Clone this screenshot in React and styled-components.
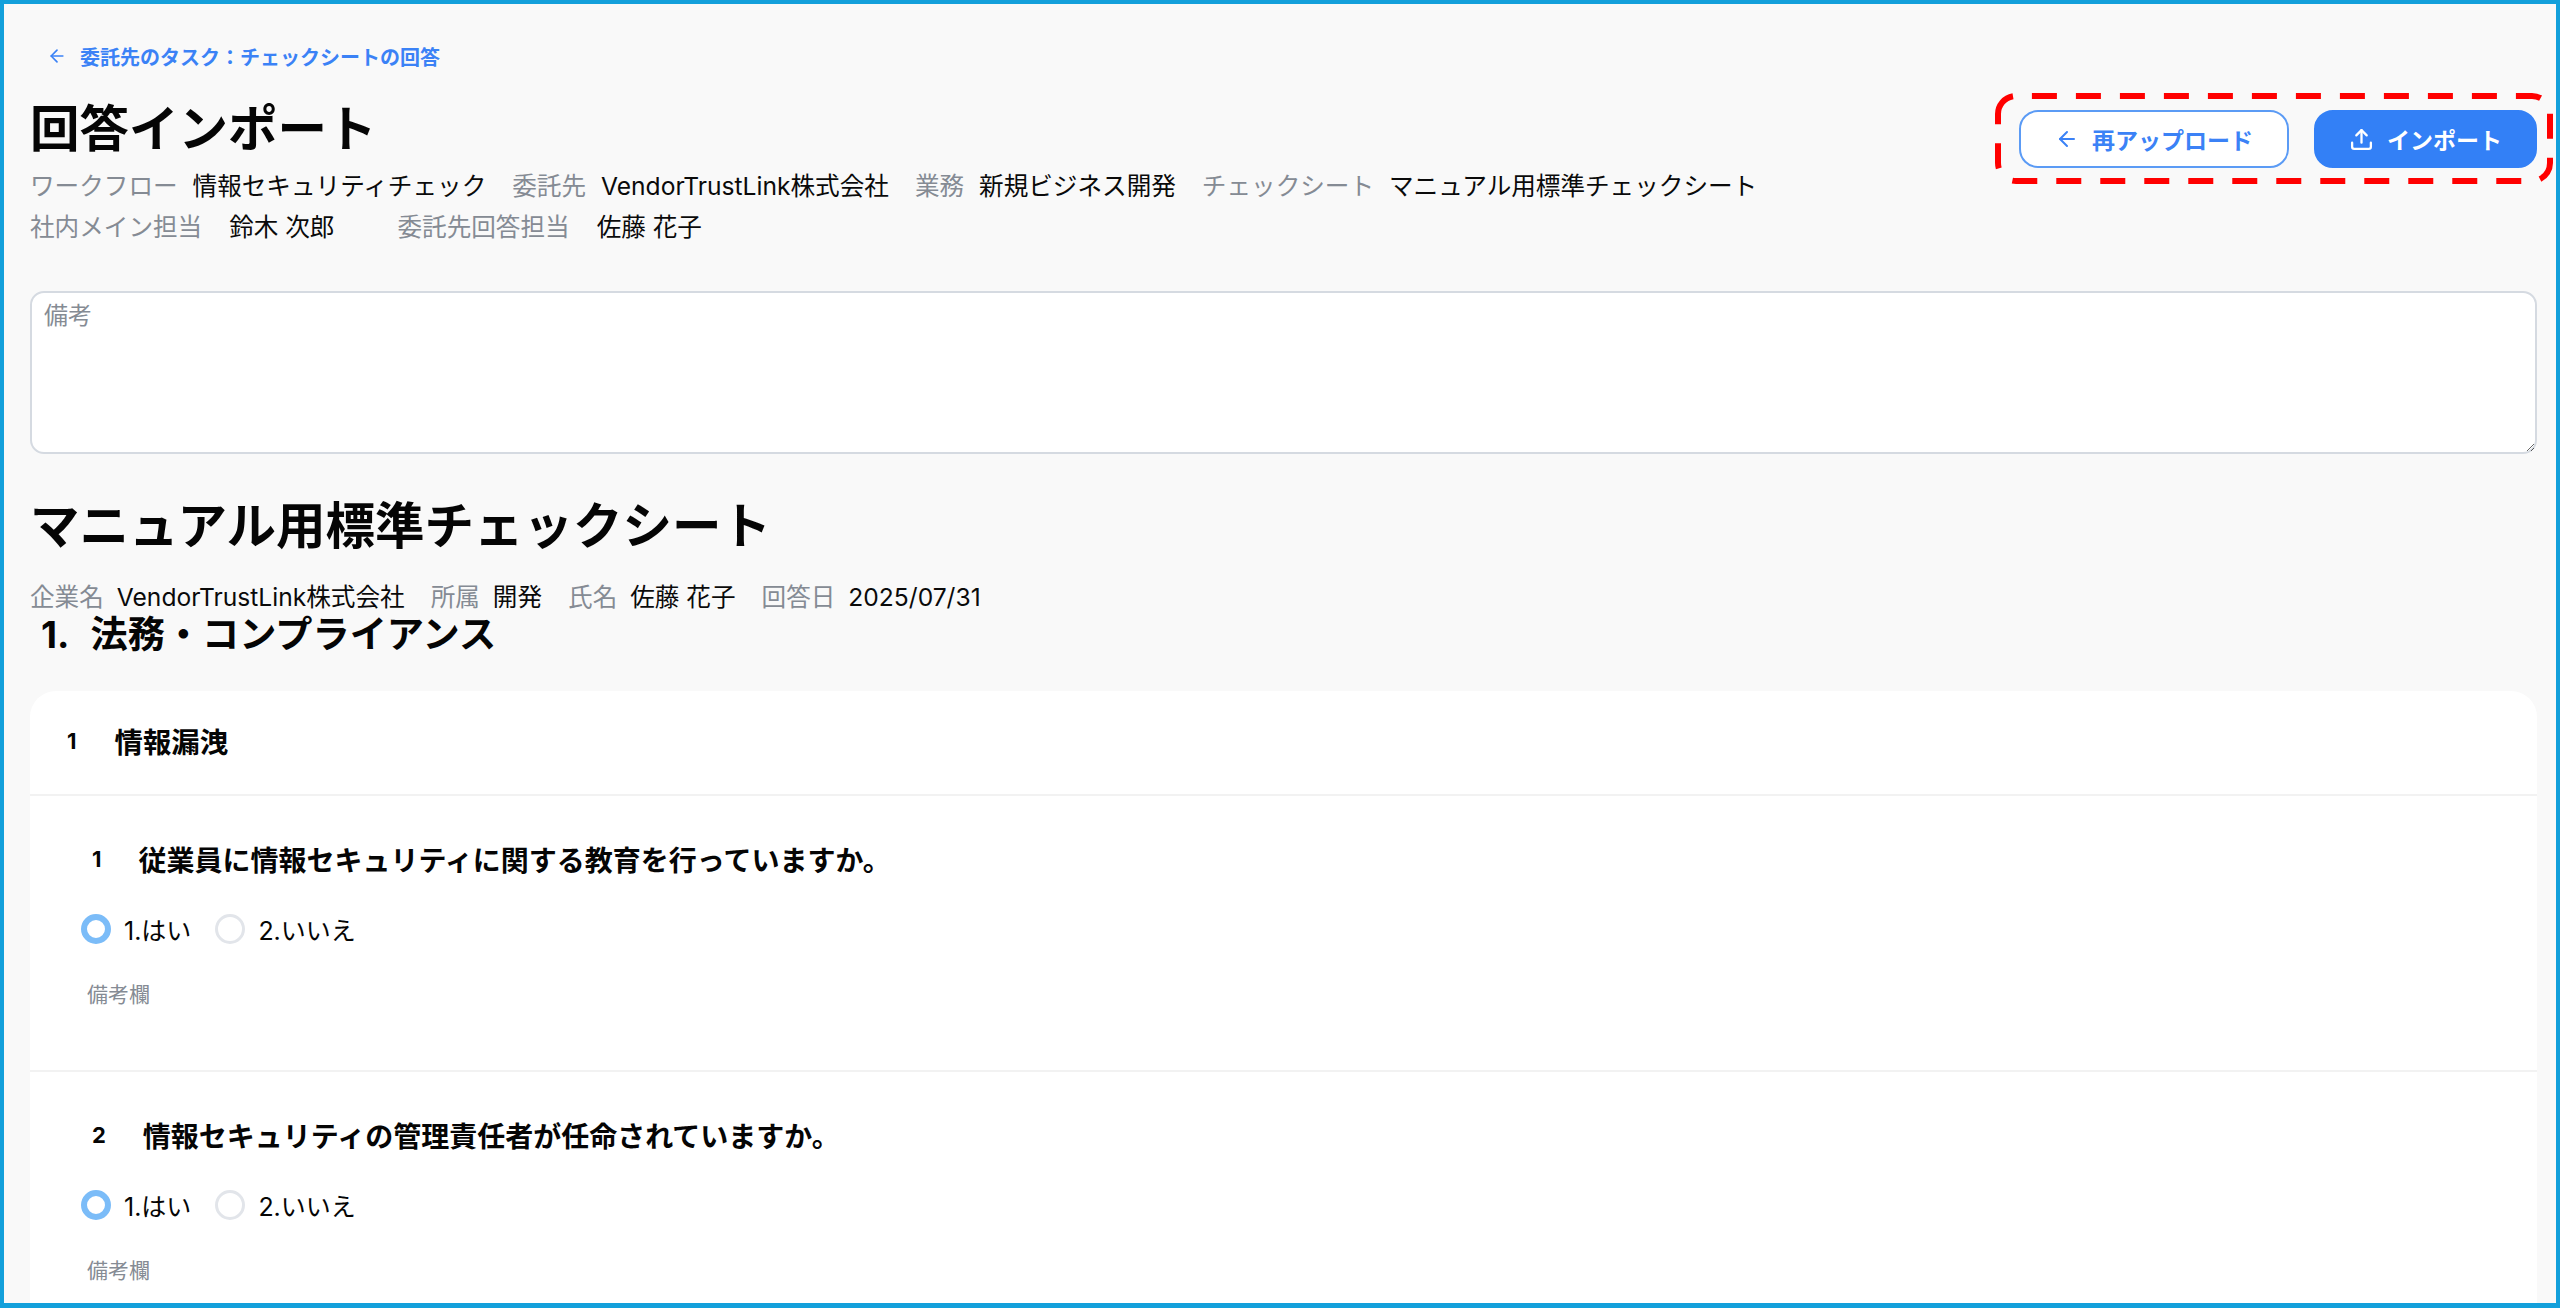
import React from "react";
import styled, { createGlobalStyle } from "styled-components";
import { ArrowLeft, Upload } from "lucide-react";

const GlobalStyle = createGlobalStyle`
  html, body {
    margin: 0;
    padding: 0;
    height: 100%;
    overflow: hidden;
  }
  * {
    box-sizing: border-box;
  }
  body {
    font-family: Inter, "Noto Sans CJK JP", sans-serif;
    color: #050505;
  }
`;

const Frame = styled.div`
  height: 100vh;
  overflow: hidden;
  border: solid #13a0db;
  border-width: 4px 4px 5px 4px;
  background: #f9f9f9;
`;

const Page = styled.main`
  padding: 37px 19px 0 26px;
`;

const BackLink = styled.a`
  display: flex;
  align-items: center;
  gap: 13px;
  height: 30px;
  padding-left: 17px;
  font-size: 20px;
  font-weight: 600;
  color: #3b82f6;
`;

const Header = styled.header`
  display: flex;
  justify-content: space-between;
  align-items: flex-start;
  margin-top: 28px;
`;

const Title = styled.h1`
  margin: 0;
  font-size: 49.5px;
  line-height: 60px;
  font-weight: 700;
`;

const Meta = styled.div`
  display: flex;
  align-items: baseline;
  gap: ${(props) => props.$gap || 26}px;
  margin-top: ${(props) => props.$top || 0}px;
  height: ${(props) => props.$height || 41}px;
  font-size: 24.6px;
  line-height: ${(props) => props.$height || 41}px;
`;

const MetaItem = styled.div`
  display: flex;
  align-items: baseline;
  gap: ${(props) => props.$gap || 15}px;
`;

const Label = styled.span`
  color: #858b94;
`;

const Value = styled.span`
  color: #0a0a0a;
`;

const Actions = styled.div`
  position: relative;
  display: flex;
  gap: 25px;
  margin-top: 11px;
`;

const Button = styled.button`
  display: flex;
  align-items: center;
  justify-content: center;
  gap: 13px;
  width: ${(props) => props.$width}px;
  height: 58px;
  border-radius: 19px;
  border: 2px solid ${(props) => (props.$primary ? "#3380f6" : "#5b9bf5")};
  background: ${(props) => (props.$primary ? "#3380f6" : "#fff")};
  color: ${(props) => (props.$primary ? "#fff" : "#3b82f6")};
  font-family: inherit;
  font-size: 23px;
  font-weight: 600;
`;

const Annotation = styled.svg`
  position: absolute;
  top: -17px;
  left: -24px;
  width: 558px;
  height: 91px;
  overflow: visible;
  pointer-events: none;
`;

const Notes = styled.textarea`
  display: block;
  width: 100%;
  height: 163px;
  margin-top: 43px;
  padding: 3px 12px;
  border: 2px solid #d5dae1;
  border-radius: 14px;
  background: #fff;
  font-family: inherit;
  font-size: 24px;
  &::placeholder {
    color: #858b94;
  }
`;

const SheetTitle = styled.h2`
  margin: 42px 0 0;
  font-size: 49.5px;
  line-height: 60px;
  font-weight: 700;
`;

const SectionTitle = styled.h3`
  display: flex;
  gap: 21px;
  margin: 1px 0 0;
  padding-left: 11px;
  font-size: 37.2px;
  line-height: 44px;
  font-weight: 700;
`;

const Card = styled.section`
  margin-top: 34px;
  background: #fff;
  border-radius: 26px 26px 0 0;
`;

const CardHeader = styled.div`
  display: flex;
  align-items: center;
  gap: 38px;
  height: 105px;
  padding: 0 0 4px 37px;
  border-bottom: 2px solid #f2f2f2;
  font-size: 28.4px;
  font-weight: 700;
`;

const CardNumber = styled.span`
  font-size: 22px;
  font-weight: 700;
`;

const Question = styled.div`
  height: 276px;
  padding: 43px 0 0 57px;
  border-bottom: 2px solid #f2f2f2;
  &:last-child {
    border-bottom: 0;
  }
`;

const QuestionText = styled.div`
  display: flex;
  align-items: center;
  gap: 37px;
  height: 40px;
  padding-left: 5px;
  font-size: 28px;
  font-weight: 700;
`;

const Options = styled.div`
  display: flex;
  align-items: center;
  gap: 24px;
  margin: 35px 0 0 -6px;
`;

const Option = styled.label`
  display: flex;
  align-items: center;
  gap: 13px;
  height: 30px;
  font-size: 25px;
`;

const Radio = styled.span`
  width: 30px;
  height: 30px;
  border-radius: 50%;
  background: #fff;
  border: ${(props) =>
    props.$checked ? "6px solid #7bbcf8" : "3px solid #e2e5ea"};
`;

const NoteLabel = styled.div`
  margin-top: 36px;
  line-height: 30px;
  font-size: 21px;
  color: #858b94;
`;

const questions = [
  { id: 1, text: "従業員に情報セキュリティに関する教育を行っていますか。" },
  { id: 2, text: "情報セキュリティの管理責任者が任命されていますか。" },
];

const App = () => {
  return (
    <>
      <GlobalStyle />
      <Frame>
        <Page>
          <BackLink>
            <ArrowLeft size={20} strokeWidth={2} />
            委託先のタスク：チェックシートの回答
          </BackLink>

          <Header>
            <div>
              <Title>回答インポート</Title>
              <Meta $top={7}>
                <MetaItem>
                  <Label>ワークフロー</Label>
                  <Value>情報セキュリティチェック</Value>
                </MetaItem>
                <MetaItem>
                  <Label>委託先</Label>
                  <Value>VendorTrustLink株式会社</Value>
                </MetaItem>
                <MetaItem>
                  <Label>業務</Label>
                  <Value>新規ビジネス開発</Value>
                </MetaItem>
                <MetaItem>
                  <Label>チェックシート</Label>
                  <Value>マニュアル用標準チェックシート</Value>
                </MetaItem>
              </Meta>
              <Meta $gap={63}>
                <MetaItem $gap={27}>
                  <Label>社内メイン担当</Label>
                  <Value>鈴木 次郎</Value>
                </MetaItem>
                <MetaItem $gap={27}>
                  <Label>委託先回答担当</Label>
                  <Value>佐藤 花子</Value>
                </MetaItem>
              </Meta>
            </div>
            <Actions>
              <Button $width={270}>
                <ArrowLeft size={24} strokeWidth={2} />
                再アップロード
              </Button>
              <Button $width={223} $primary>
                <Upload size={25} strokeWidth={2.2} />
                インポート
              </Button>
              <Annotation viewBox="0 0 558 91">
                <path
                  d="M3 21 A18 18 0 0 1 21 3 H537 A18 18 0 0 1 555 21 V70 A18 18 0 0 1 537 88 H21 A18 18 0 0 1 3 70 Z"
                  fill="none"
                  stroke="#ff0000"
                  strokeWidth="6"
                  strokeDasharray="25 19"
                />
              </Annotation>
            </Actions>
          </Header>

          <Notes placeholder="備考" />

          <SheetTitle>マニュアル用標準チェックシート</SheetTitle>
          <Meta $top={26} $height={30}>
            <MetaItem $gap={13}>
              <Label>企業名</Label>
              <Value>VendorTrustLink株式会社</Value>
            </MetaItem>
            <MetaItem $gap={13}>
              <Label>所属</Label>
              <Value>開発</Value>
            </MetaItem>
            <MetaItem $gap={13}>
              <Label>氏名</Label>
              <Value>佐藤 花子</Value>
            </MetaItem>
            <MetaItem $gap={13}>
              <Label>回答日</Label>
              <Value>2025/07/31</Value>
            </MetaItem>
          </Meta>
          <SectionTitle>
            <span>1.</span>
            <span>法務・コンプライアンス</span>
          </SectionTitle>

          <Card>
            <CardHeader>
              <CardNumber>1</CardNumber>
              情報漏洩
            </CardHeader>
            {questions.map((q) => (
              <Question key={q.id}>
                <QuestionText>
                  <CardNumber>{q.id}</CardNumber>
                  {q.text}
                </QuestionText>
                <Options>
                  <Option>
                    <Radio $checked />
                    1.はい
                  </Option>
                  <Option>
                    <Radio />
                    2.いいえ
                  </Option>
                </Options>
                <NoteLabel>備考欄</NoteLabel>
              </Question>
            ))}
          </Card>
        </Page>
      </Frame>
    </>
  );
};

export default App;
